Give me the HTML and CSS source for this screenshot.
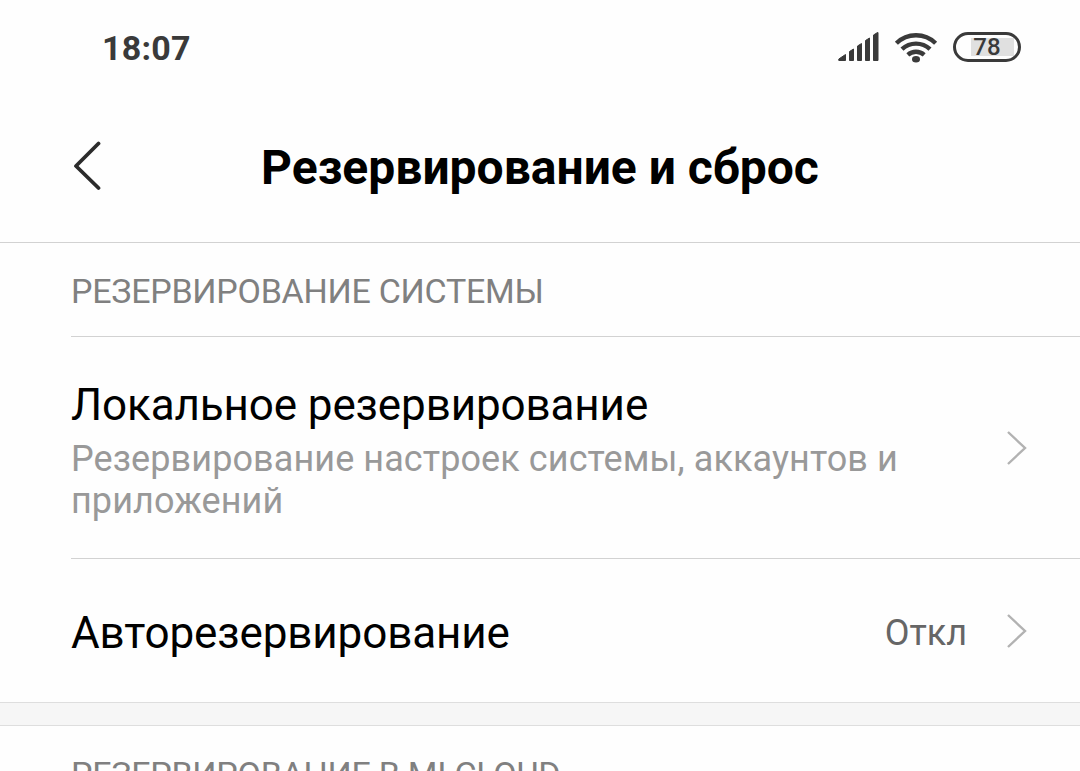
FILE: index.html
```html
<!DOCTYPE html>
<html lang="ru">
<head>
  <meta charset="UTF-8" />
  <meta name="viewport" content="width=device-width, initial-scale=1">
  <title>Резервирование и сброс</title>
  <link rel="stylesheet" href="styles.css">
</head>
<body>

  <div class="status-bar">
    <span class="time">18:07</span>
    <div class="status-icons">
      <svg class="signal" width="42" height="30" viewBox="0 0 42 30">
        <g fill="#3a3a3a" stroke="#3a3a3a" stroke-width="1" stroke-linejoin="round">
          <path d="M.8 28.500v-1.500l6.700-4.500v6zM11.500 28.500V19.500l4-2.500v11.500zM19.500 28.500V14l4-2.500v17zM27.500 28.500V8.500l4-2.500v22.500zM35.500 28.500V3l4-2.500h.5v28z"/>
        </g>
      </svg>
      <svg class="wifi" width="44" height="32" viewBox="0 0 44 32">
        <g fill="none" stroke="#3a3a3a" stroke-width="4.400">
          <path d="M2.400 12.200a28 28 0 0 1 39.200 0"/>
          <path d="M8 18.200a20.500 20.500 0 0 1 28 0"/>
          <path d="M13.800 23.800a12.500 12.500 0 0 1 16.400 0"/>
        </g>
        <ellipse cx="22" cy="28.300" rx="4" ry="3.200" fill="#3a3a3a"/>
      </svg>
      <div class="battery"><span>78</span></div>
    </div>
  </div>

  <header class="header">
    <svg class="back" width="30" height="50" viewBox="0 0 30 50">
      <path d="M26.500 2.500L4 25l22.500 22" fill="none" stroke="#2b2b2b" stroke-width="3.800" stroke-linecap="round" stroke-linejoin="round"/>
    </svg>
    <h1>Резервирование и сброс</h1>
  </header>

  <h2 class="section">РЕЗЕРВИРОВАНИЕ СИСТЕМЫ</h2>

  <div class="item item-local">
    <div class="text">
      <p class="title">Локальное резервирование</p>
      <p class="summary">Резервирование настроек системы, аккаунтов и приложений</p>
    </div>
    <svg class="arrow" width="22" height="36" viewBox="0 0 22 36">
      <path d="M2 2l17 16L2 34" fill="none" stroke="#b2b2b2" stroke-width="2.400"/>
    </svg>
  </div>

  <div class="item item-auto">
    <div class="text">
      <p class="title">Авторезервирование</p>
    </div>
    <span class="value">Откл</span>
    <svg class="arrow" width="22" height="36" viewBox="0 0 22 36">
      <path d="M2 2l17 16L2 34" fill="none" stroke="#b2b2b2" stroke-width="2.400"/>
    </svg>
  </div>

  <div class="gap"></div>

  <h2 class="section">РЕЗЕРВИРОВАНИЕ В MI CLOUD</h2>

</body>
</html>
```
FILE: styles.css
```css
* {
  box-sizing: border-box;
}

body {
  font-family: Roboto, sans-serif;
  background: #fefefe;
  color: #000;
  margin: 0;
  height: 771px;
  overflow: hidden;
}

h1, h2, p {
  margin: 0;
  font-weight: normal;
}

svg {
  display: block;
  flex-shrink: 0;
}

/* status bar */
.status-bar {
  height: 94px;
  padding: 0 59px 0 102px;
  display: flex;
  align-items: center;
  justify-content: space-between;
}

.time {
  padding-top: 2px;
  font-size: 34px;
  font-weight: bold;
  letter-spacing: 0.2px;
  color: #3a3a3a;
}

.status-icons {
  display: flex;
  align-items: center;
}

.wifi {
  margin: 0 15px 0 14px;
}

.battery {
  width: 68px;
  height: 30px;
  border: 3px solid #3a3a3a;
  border-radius: 15px;
  background: linear-gradient(90deg, #e0e0e0, #e0e0e0) 15px 3px / 43px 18px no-repeat;
  display: flex;
  align-items: center;
  justify-content: center;
  font-size: 24px;
  font-weight: 500;
  color: #3a3a3a;
}

/* header */
.header {
  height: 149px;
  padding: 0 72px 2px;
  display: flex;
  align-items: center;
  border-bottom: 1px solid #d2d2d2;
}

.back {
  margin-bottom: 2px;
}

.header h1 {
  flex: 1;
  margin-right: 30px;
  text-align: center;
  font-size: 48px;
  font-weight: bold;
  white-space: nowrap;
}

/* list */
.section {
  height: 93px;
  padding: 4px 0 0 71px;
  line-height: 89px;
  font-size: 34px;
  letter-spacing: -0.26px;
  color: #808080;
}

.item {
  margin-left: 71px;
  padding-right: 52px;
  border-top: 1px solid #d2d2d2;
  display: flex;
  align-items: center;
}

.item-local {
  height: 222px;
}

.item-auto {
  height: 144px;
}

.text {
  flex: 1;
  padding-top: 5px;
}

.title {
  font-size: 44px;
  line-height: 52px;
  letter-spacing: -0.12px;
}

.summary {
  width: 850px;
  margin-top: 7px;
  font-size: 36px;
  line-height: 42px;
  letter-spacing: 0.09px;
  color: #999;
}

.value {
  margin-right: 39px;
  padding-top: 4px;
  font-size: 36px;
  color: #666;
}

.gap {
  height: 24px;
  background: #f6f6f6;
  border-top: 1px solid #dedede;
  border-bottom: 1px solid #dedede;
}
```
